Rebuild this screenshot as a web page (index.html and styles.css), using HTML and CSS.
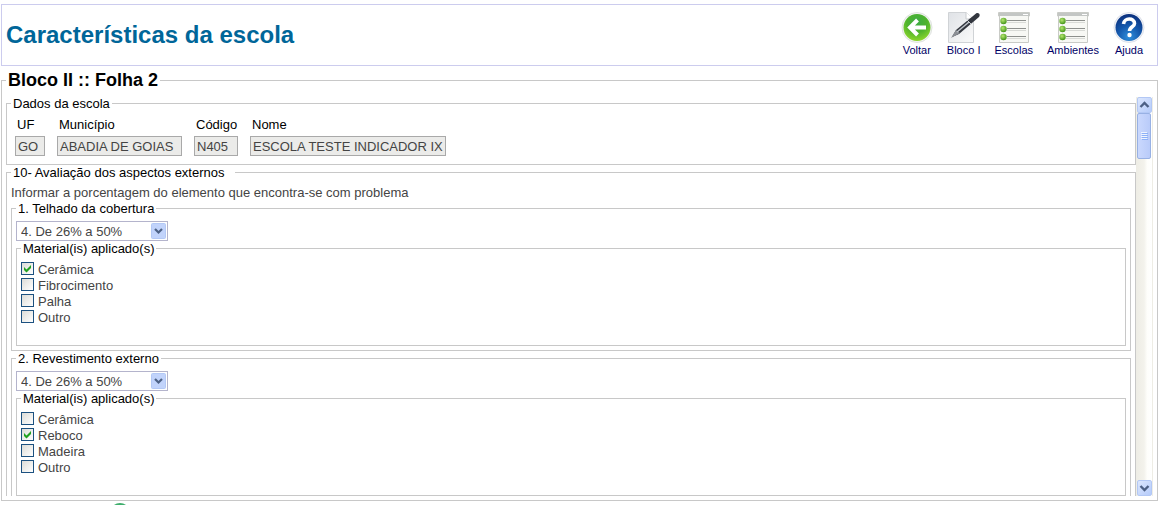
FILE: index.html
```html
<!DOCTYPE html>
<html lang="pt-BR">
<head>
<meta charset="utf-8">
<title>Características da escola</title>
<link rel="stylesheet" href="styles.css">
</head>
<body>
<svg class="defs" aria-hidden="true">
  <defs>
    <radialGradient id="green" cx="50%" cy="30%" r="75%"><stop offset="0" stop-color="#3cab45"/><stop offset="0.5" stop-color="#4fb32c"/><stop offset="1" stop-color="#96dc2c"/></radialGradient>
    <radialGradient id="blue" cx="50%" cy="85%" r="85%"><stop offset="0" stop-color="#2f8fdc"/><stop offset="0.5" stop-color="#1458ac"/><stop offset="1" stop-color="#0b2f7c"/></radialGradient>
    <radialGradient id="bullet" cx="40%" cy="35%" r="70%"><stop offset="0" stop-color="#b6e870"/><stop offset="1" stop-color="#3c8f14"/></radialGradient>
    <linearGradient id="paper" x1="0" y1="0" x2="1" y2="1"><stop offset="0" stop-color="#dfe2e6"/><stop offset="1" stop-color="#fafafa"/></linearGradient>
    <symbol id="list" viewBox="0 0 32 32">
      <path d="M.5 .5H31.500V4H30.500V30.500H1.500V4H.5Z" fill="#f7f8f4" stroke="#c9cbc6"/>
      <path d="M1 1H31V4H1Z" fill="#c3c6c4"/>
      <path d="M25 2.500H30" stroke="#fff"/>
      <path d="M9 8.500H28M9 16.500H28M9 24.500H28" stroke="#8d908d"/>
      <path d="M9 10.500H28M9 18.500H28M9 26.500H28" stroke="#d8dad6"/>
      <g fill="url(#bullet)"><circle cx="5.500" cy="9" r="3.200"/><circle cx="5.500" cy="17" r="3.200"/><circle cx="5.500" cy="25" r="3.200"/></g>
    </symbol>
  </defs>
</svg>

<header class="header">
  <h1 class="title">Características da escola</h1>
  <nav class="toolbar">
    <a class="tool" href="#voltar">
      <svg class="tool-icon" viewBox="0 0 32 32"><circle cx="16" cy="15.500" r="15" fill="#f2f4f2" stroke="#dfe3df"/><circle cx="16" cy="15.500" r="13.500" fill="url(#green)"/><path d="M16.500 8L9 15.500L16.500 23M10 15.500H25" fill="none" stroke="#fff" stroke-width="4"/></svg>
      Voltar
    </a>
    <a class="tool" href="#bloco">
      <svg class="tool-icon" viewBox="0 0 32 32"><path d="M.5 .5H18L25.500 7V30.500H.5Z" fill="url(#paper)" stroke="#d0d3d6"/><path d="M18 .5V7H25.500" fill="#fff" stroke="#c8cbce"/><path d="M4 25L8 18L28 1.500C30 0 33 2 31 5L11 22Z" fill="#33373f"/><path d="M3 26L8 18L12 21Z" fill="#8b8f95"/><path d="M9 20L21 10" stroke="#bfc4ca" stroke-width="1.500"/><path d="M19 8L23 12" stroke="#cdd1d5"/></svg>
      Bloco I
    </a>
    <a class="tool" href="#escolas"><svg class="tool-icon"><use href="#list"/></svg>Escolas</a>
    <a class="tool" href="#ambientes"><svg class="tool-icon"><use href="#list"/></svg>Ambientes</a>
    <a class="tool" href="#ajuda">
      <svg class="tool-icon" viewBox="0 0 32 32"><circle cx="16" cy="15.500" r="15" fill="#f2f4f8" stroke="#dde1ea"/><circle cx="16" cy="15.500" r="13.500" fill="url(#blue)"/><path d="M10.500 12C11 5.500 21.500 5.500 21.500 11.500C21.500 15 16.500 14.500 16.500 19" fill="none" stroke="#fff" stroke-width="3.600"/><circle cx="16.500" cy="23" r="2.200" fill="#fff"/></svg>
      Ajuda
    </a>
  </nav>
</header>

<form>
<fieldset class="panel">
  <legend class="panel-legend">Bloco II :: Folha 2</legend>
  <div class="viewport">
    <div class="content">
      <fieldset class="group school">
        <legend>Dados da escola</legend>
        <div class="fields">
          <div class="field uf"><label for="uf">UF</label><input id="uf" value="GO" readonly></div>
          <div class="field city"><label for="city">Município</label><input id="city" value="ABADIA DE GOIAS" readonly></div>
          <div class="field code"><label for="code">Código</label><input id="code" value="N405" readonly></div>
          <div class="field name"><label for="name">Nome</label><input id="name" value="ESCOLA TESTE INDICADOR IX" readonly></div>
        </div>
      </fieldset>

      <fieldset class="group section">
        <legend class="wide">10- Avaliação dos aspectos externos</legend>
        <p class="hint">Informar a porcentagem do elemento que encontra-se com problema</p>
        <fieldset class="group item">
          <legend>1. Telhado da cobertura</legend>
          <select class="range" aria-label="Telhado da cobertura"><option>4. De 26% a 50%</option></select>
          <fieldset class="group materials">
            <legend>Material(is) aplicado(s)</legend>
            <label class="check"><input type="checkbox" checked>Cerâmica</label>
            <label class="check"><input type="checkbox">Fibrocimento</label>
            <label class="check"><input type="checkbox">Palha</label>
            <label class="check"><input type="checkbox">Outro</label>
          </fieldset>
        </fieldset>
        <fieldset class="group item">
          <legend>2. Revestimento externo</legend>
          <select class="range" aria-label="Revestimento externo"><option>4. De 26% a 50%</option></select>
          <fieldset class="group materials">
            <legend>Material(is) aplicado(s)</legend>
            <label class="check"><input type="checkbox">Cerâmica</label>
            <label class="check"><input type="checkbox" checked>Reboco</label>
            <label class="check"><input type="checkbox">Madeira</label>
            <label class="check"><input type="checkbox">Outro</label>
          </fieldset>
        </fieldset>
      </fieldset>
    </div>
    <div class="scrollbar">
      <button class="arrow" type="button" aria-label="Rolar para cima"><svg viewBox="0 0 13 14"><path d="M2.500 9L6.500 5L10.500 9" fill="none" stroke="#4d6185" stroke-width="2.400"/></svg></button>
      <div class="thumb"><svg viewBox="0 0 7 8"><path d="M0 .5H6M0 2.500H6M0 4.500H6M0 6.500H6" stroke="#eef4fe"/><path d="M1 1.500H7M1 3.500H7M1 5.500H7M1 7.500H7" stroke="#8cb0f8"/></svg></div>
      <div class="track"></div>
      <button class="arrow" type="button" aria-label="Rolar para baixo"><svg viewBox="0 0 13 14"><path d="M2.500 5L6.500 9L10.500 5" fill="none" stroke="#4d6185" stroke-width="2.400"/></svg></button>
    </div>
  </div>
</fieldset>
</form>
<footer class="footer"><svg class="dot" viewBox="0 0 20 20"><circle cx="10" cy="10" r="10" fill="#3fae6c"/></svg></footer>
</body>
</html>
```
FILE: styles.css
```css
* { box-sizing: border-box; }
html, body { height: 100%; overflow: hidden; }
body {
  margin: 0;
  padding: 4px 3px 0 1px;
  background: #fff;
  color: #444;
  font: 13px/16px "Liberation Sans", Arial, sans-serif;
}
.defs { position: absolute; width: 0; height: 0; }

.header {
  display: flex;
  justify-content: space-between;
  align-items: center;
  height: 62px;
  padding: 0 12px 0 4px;
  border: 1px solid #ccccee;
}
.title { margin: 0; color: #006699; font-size: 24px; line-height: 28px; }
.toolbar { display: flex; gap: 14px; padding-bottom: 2px; }
.tool {
  display: flex;
  flex-direction: column;
  align-items: center;
  color: #000066;
  font-size: 11px;
  line-height: 13px;
  text-decoration: none;
}
.tool-icon { width: 32px; height: 32px; }

fieldset { min-width: 0; margin: 0; border: 1px solid #c8c8c8; }
.panel { margin-top: 5px; padding: 7px 4px 4px; }
.panel-legend {
  padding: 0 2px;
  color: #000;
  font-size: 18px;
  font-weight: bold;
  line-height: 19px;
}
.viewport { display: flex; height: calc(100vh - 106px); overflow: hidden; }
.content { flex: 1; min-width: 0; }

.group { padding: 0 4px 4px; }
.group + .group { margin-top: 1px; }
.group > legend { padding: 0 2px; color: #000; line-height: 13px; }
.group > .wide { padding-right: 10px; }
.school { padding: 7px 4px 8px; }
.section { padding-top: 6px; }
.fields { display: flex; gap: 12px; padding: 0 4px; }
.field { display: flex; flex-direction: column; gap: 3px; }
.field label { padding-left: 2px; color: #000; }
.field input {
  width: 100%;
  height: 20px;
  padding: 0 2px;
  border: 1px solid #a9a9a9;
  background: #ebebe9;
  color: #444;
  font: 13px "Liberation Sans", Arial, sans-serif;
}
.uf { width: 30px; }
.city { width: 125px; }
.code { width: 44px; }
.name { width: 196px; }

.hint { margin: 0; padding-bottom: 1px; }
.item { padding-top: 6px; }
.range {
  display: block;
  width: 152px;
  height: 20px;
  padding: 0 4px;
  appearance: none;
  border: 1px solid #b4b4cc;
  border-radius: 0;
  color: #444;
  font: 13px "Liberation Sans", Arial, sans-serif;
  background: #fff url("data:image/svg+xml,%3Csvg xmlns='http://www.w3.org/2000/svg' width='15' height='16'%3E%3Crect x='.5' y='.5' width='14' height='15' rx='1' fill='%23c1d3fb' stroke='%23b3c8f5'/%3E%3Cpath d='M4 6L7.500 9.500L11 6' fill='none' stroke='%234d6185' stroke-width='2.200'/%3E%3C/svg%3E") right 1px center no-repeat;
}
.materials { min-height: 104px; margin-top: 1px; padding-top: 7px; }
.check { display: flex; gap: 4px; width: max-content; height: 16px; }
.check input {
  width: 13px;
  height: 13px;
  margin: 0;
  appearance: none;
  border: 1px solid #1c5180;
  background: linear-gradient(135deg, #dcdcd7, #fff);
}
.check input:checked {
  background: url("data:image/svg+xml,%3Csvg xmlns='http://www.w3.org/2000/svg' width='11' height='11'%3E%3Cpath d='M2 4V7L4.500 9.500L9 5V2L4.500 6.500Z' fill='%2321a121'/%3E%3C/svg%3E") center no-repeat, linear-gradient(135deg, #dcdcd7, #fff);
}

.scrollbar {
  display: flex;
  flex-direction: column;
  width: 17px;
  padding: 0 1px;
  background: linear-gradient(90deg, #eeede5, #f3f2ec 50%, #fefefb 70%, #fff);
  border-right: 1px solid #eeede5;
}
.arrow {
  width: 15px;
  height: 16px;
  padding: 0;
  border: 1px solid #b3c8f5;
  border-radius: 2px;
  background: linear-gradient(135deg, #dce7fe, #b5cbfa);
}
.arrow svg { display: block; width: 13px; height: 14px; }
.thumb {
  display: flex;
  align-items: center;
  justify-content: center;
  height: 46px;
  border: 1px solid #98b1e4;
  border-radius: 2px;
  background: linear-gradient(90deg, #cad8fd, #b9cbf9);
}
.thumb svg { width: 7px; height: 8px; }
.track { flex: 1; }
.footer { height: 4px; padding: 2px 0 0 109px; overflow: hidden; }
.dot { display: block; width: 20px; height: 20px; }
```
